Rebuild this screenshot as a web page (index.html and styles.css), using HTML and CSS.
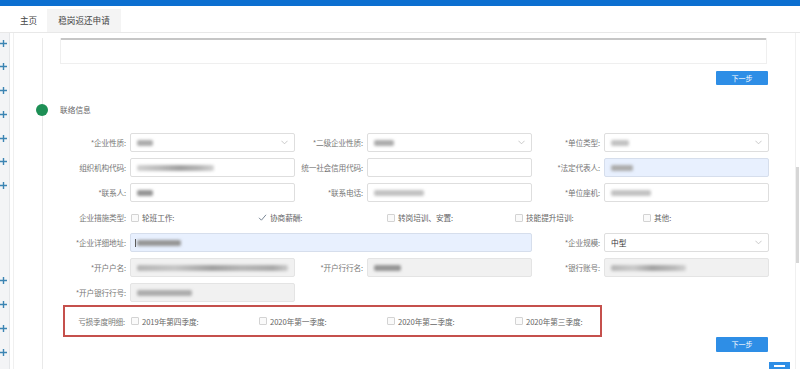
FILE: index.html
```html
<!DOCTYPE html>
<html lang="zh-CN">
<head>
<meta charset="utf-8">
<title>稳岗返还申请</title>
<link rel="stylesheet" href="styles.css">
</head>
<body>
<div class="topbar"></div>
<nav class="tabs">
  <div class="tab">主页</div>
  <div class="tab active">稳岗返还申请</div>
</nav>
<div class="body">
  <aside class="sidebar">
    <span class="side-item"><svg class="plus" viewBox="0 0 7 7"><path d="M0 3.5H7M3.5 0V7"/></svg></span>
    <span class="side-item"><svg class="plus" viewBox="0 0 7 7"><path d="M0 3.5H7M3.5 0V7"/></svg></span>
    <span class="side-item"><svg class="plus" viewBox="0 0 7 7"><path d="M0 3.5H7M3.5 0V7"/></svg></span>
    <span class="side-item"><svg class="plus" viewBox="0 0 7 7"><path d="M0 3.5H7M3.5 0V7"/></svg></span>
    <span class="side-item"><svg class="plus" viewBox="0 0 7 7"><path d="M0 3.5H7M3.5 0V7"/></svg></span>
    <span class="side-item"><svg class="plus" viewBox="0 0 7 7"><path d="M0 3.5H7M3.5 0V7"/></svg></span>
    <span class="side-item"><svg class="plus" viewBox="0 0 7 7"><path d="M0 3.5H7M3.5 0V7"/></svg></span>
    <span class="side-item"></span>
    <span class="side-item"></span>
    <span class="side-item"></span>
    <span class="side-item"><svg class="plus" viewBox="0 0 7 7"><path d="M0 3.5H7M3.5 0V7"/></svg></span>
    <span class="side-item"><svg class="plus" viewBox="0 0 7 7"><path d="M0 3.5H7M3.5 0V7"/></svg></span>
    <span class="side-item"><svg class="plus" viewBox="0 0 7 7"><path d="M0 3.5H7M3.5 0V7"/></svg></span>
    <span class="side-item"><svg class="plus" viewBox="0 0 7 7"><path d="M0 3.5H7M3.5 0V7"/></svg></span>
  </aside>

  <main class="panel">
    <div class="timeline">
      <div class="tablebox"><div class="hscroll"></div></div>
      <div class="btnrow"><button class="btn">下一步</button></div>

      <div class="section-title"><span class="dot"></span>联络信息</div>

      <div class="form">
        <!-- row 1 -->
        <div class="lbl">*企业性质:</div>
        <div class="ctl"><span class="blob w16 mid"></span><svg class="chev" viewBox="0 0 8 5"><path d="M0.5 0.5L4 4L7.5 0.5"/></svg></div>
        <div class="lbl">*二级企业性质:</div>
        <div class="ctl"><span class="blob w20 mid"></span><svg class="chev" viewBox="0 0 8 5"><path d="M0.5 0.5L4 4L7.5 0.5"/></svg></div>
        <div class="lbl">*单位类型:</div>
        <div class="ctl"><span class="blob w18 light"></span><svg class="chev" viewBox="0 0 8 5"><path d="M0.5 0.5L4 4L7.5 0.5"/></svg></div>

        <!-- row 2 -->
        <div class="lbl">组织机构代码:</div>
        <div class="ctl"><span class="blob w77 grad"></span></div>
        <div class="lbl">统一社会信用代码:</div>
        <div class="ctl"></div>
        <div class="lbl">*法定代表人:</div>
        <div class="ctl blue"><span class="blob w22 mid"></span></div>

        <!-- row 3 -->
        <div class="lbl">*联系人:</div>
        <div class="ctl"><span class="blob w16 dark"></span></div>
        <div class="lbl">*联系电话:</div>
        <div class="ctl"><span class="blob w50 light"></span></div>
        <div class="lbl">*单位座机:</div>
        <div class="ctl"><span class="blob w40 light"></span></div>

        <!-- row 4 -->
        <div class="lbl">企业措施类型:</div>
        <div class="checks">
          <label class="chk"><span class="box"></span>轮班工作:</label>
          <label class="chk"><svg class="tick" viewBox="0 0 9 9"><path d="M1 4.8L3.4 7.2L8 1.8"/></svg>协商薪酬:</label>
          <label class="chk"><span class="box"></span>转岗培训、安置:</label>
          <label class="chk"><span class="box"></span>技能提升培训:</label>
          <label class="chk"><span class="box"></span>其他:</label>
        </div>

        <!-- row 5 -->
        <div class="lbl">*企业详细地址:</div>
        <div class="ctl blue wide"><span class="caret"></span><span class="blob w44 dark"></span></div>
        <div class="lbl">*企业规模:</div>
        <div class="ctl"><span class="val">中型</span><svg class="chev" viewBox="0 0 8 5"><path d="M0.5 0.5L4 4L7.5 0.5"/></svg></div>

        <!-- row 6 -->
        <div class="lbl">*开户户名:</div>
        <div class="ctl gray"><span class="blob w155 grad2"></span></div>
        <div class="lbl">*开户行行名:</div>
        <div class="ctl gray"><span class="blob w27 dark"></span></div>
        <div class="lbl">*银行账号:</div>
        <div class="ctl gray"><span class="blob w75 grad3"></span></div>

        <!-- row 7 -->
        <div class="lbl">*开户银行行号:</div>
        <div class="ctl gray"><span class="blob w55 mid"></span></div>
      </div>

      <div class="redbox">
        <div class="lbl red-lbl">亏损季度明细:</div>
        <label class="chk"><span class="box"></span>2019年第四季度:</label>
        <label class="chk"><span class="box"></span>2020年第一季度:</label>
        <label class="chk"><span class="box"></span>2020年第二季度:</label>
        <label class="chk last"><span class="box"></span>2020年第三季度:</label>
      </div>

      <div class="btnrow2"><button class="btn">下一步</button></div>
    </div>
  </main>

  <div class="vscroll"><div class="thumb"></div></div>
  <div class="totop"><span class="totop-bar"></span></div>
</div>
</body>
</html>
```

FILE: styles.css
```css
html, body {
  margin: 0;
  padding: 0;
}
body {
  width: 800px;
  height: 369px;
  overflow: hidden;
  background: #fff;
  font-family: "Noto Sans CJK SC", "Noto Sans", sans-serif;
  color: #555;
}

.topbar {
  height: 6px;
  background: #0c6fd0;
}

.tabs {
  height: 26px;
  border-bottom: 1px solid #e8e8e8;
  display: flex;
  align-items: flex-end;
  padding-left: 11px;
  box-sizing: content-box;
}
.tab {
  height: 23px;
  line-height: 23px;
  padding: 0 9px 0 9px;
  font-size: 8.6px;
  color: #444;
  margin-right: 1px;
}
.tab.active {
  background: #f4f4f4;
  padding: 0 11px 0 11px;
}

.body {
  position: relative;
  display: flex;
  height: 336px;
}

.sidebar {
  width: 9px;
  background: #f3f4f6;
  border-right: 1px solid #e4e6e9;
  display: flex;
  flex-direction: column;
  padding-top: 0;
}
.side-item {
  height: 23.8px;
  flex: 0 0 23.8px;
  display: flex;
  align-items: flex-start;
  padding-top: 6.5px;
  box-sizing: border-box;
}
.plus {
  width: 7px;
  height: 7px;
  stroke: #3b84b3;
  stroke-width: 1.4;
  fill: none;
  margin-left: 0;
}

.panel {
  flex: 1;
  margin-left: 3px;
  border-left: 1px solid #f0f0f0;
}

.timeline {
  margin-left: 28px;
  border-left: 1px solid #e9e9e9;
  padding-left: 17px;
  width: 708px;
  height: 100%;
  box-sizing: content-box;
}

.tablebox {
  margin-top: 5px;
  height: 26px;
  width: 707px;
  border: 1px solid #efefef;
  border-top: 0;
  box-sizing: border-box;
}
.hscroll {
  margin-top: 1px;
  height: 2px;
  width: 705px;
  background: #c6c6c6;
}

.btnrow {
  margin-top: 7px;
  display: flex;
  justify-content: flex-end;
}
.btnrow2 {
  margin-top: 0;
  display: flex;
  justify-content: flex-end;
}
.btn {
  width: 52px;
  height: 14px;
  padding: 0;
  border: 0;
  border-radius: 1px;
  background: #2e8ee6;
  color: #fff;
  font-family: "Noto Sans CJK SC", sans-serif;
  font-size: 7px;
  line-height: 14px;
}
.btnrow2 .btn {
  height: 15px;
  line-height: 15px;
}

.section-title {
  position: relative;
  margin-top: 19px;
  height: 12px;
  line-height: 12px;
  font-size: 7.7px;
  color: #666;
}
.dot {
  position: absolute;
  left: -24px;
  top: 0;
  width: 12px;
  height: 12px;
  border-radius: 50%;
  background: #1d8f55;
}

.form {
  margin-top: 17px;
  display: grid;
  grid-template-columns: 70px 165px 72px 165px 72px 165px;
  grid-auto-rows: 19px;
  row-gap: 6px;
}
.lbl {
  text-align: right;
  padding-right: 4px;
  font-size: 7.7px;
  color: #777;
  line-height: 19px;
  white-space: nowrap;
  letter-spacing: -0.2px;
}
.ctl {
  border: 1px solid #dedede;
  border-radius: 2px;
  background: #fff;
  display: flex;
  align-items: center;
  padding: 0 6px;
  box-sizing: border-box;
  height: 19px;
}
.ctl.blue {
  background: #e8f0fe;
  border-color: #d6deec;
}
.ctl.gray {
  background: #f1f1f1;
  border-color: #e4e4e4;
}
.ctl.wide {
  grid-column: 2 / 5;
  padding-left: 4px;
}
.chev {
  margin-left: auto;
  width: 7px;
  height: 5px;
  stroke: #bcbcbc;
  stroke-width: 0.9;
  fill: none;
}
.val {
  font-size: 7.7px;
  color: #333;
}
.caret {
  width: 1px;
  height: 8px;
  background: #555;
  margin-right: 1px;
}

.blob {
  display: block;
  height: 6px;
  border-radius: 2px;
  filter: blur(1.4px);
}
.blob.light { background: #c2c2c2; }
.blob.mid { background: #acacac; }
.blob.dark { background: #959595; }
.blob.grad { background: linear-gradient(90deg, #d0d0d0 0%, #bababa 30%, #a0a0a0 55%, #b4b4b4 80%, #d2d2d2 100%); }
.blob.grad2 { background: linear-gradient(90deg, #b4b4b4 0%, #c6c6c6 25%, #a0a0a0 50%, #b6b6b6 70%, #a8a8a8 90%, #cacaca 100%); }
.blob.grad3 { background: linear-gradient(90deg, #b6b6b6 0%, #cacaca 30%, #a2a2a2 55%, #bababa 85%, #d2d2d2 100%); }
.w16 { width: 16px; }
.w18 { width: 18px; }
.w20 { width: 20px; }
.w22 { width: 22px; }
.w27 { width: 27px; }
.w40 { width: 40px; }
.w44 { width: 44px; }
.w50 { width: 50px; }
.w55 { width: 55px; }
.w75 { width: 75px; }
.w77 { width: 77px; }
.w155 { width: 155px; }

.checks {
  grid-column: 2 / -1;
  display: flex;
  align-items: center;
}
.chk {
  flex: 0 0 128px;
  display: flex;
  align-items: center;
  font-size: 7.7px;
  color: #666;
  white-space: nowrap;
  letter-spacing: -0.1px;
}
.chk.last {
  flex: 0 0 auto;
}
.box {
  width: 8px;
  height: 8px;
  border: 1px solid #d3d3d3;
  border-radius: 1px;
  background: #fafafa;
  box-sizing: border-box;
  margin: 0 3px 0 1px;
}
.tick {
  width: 9px;
  height: 9px;
  stroke: #7a8796;
  stroke-width: 1;
  fill: none;
  margin: 0 3px 0 0;
}

.redbox {
  margin-top: 3px;
  margin-left: 3px;
  width: 539px;
  height: 32px;
  border: 2px solid #c5504c;
  box-sizing: border-box;
  display: flex;
  align-items: center;
}
.red-lbl {
  flex: 0 0 64px;
  box-sizing: border-box;
  padding-right: 4px;
}
.redbox .chk:first-of-type {
  margin-left: 1px;
}

.vscroll {
  width: 4px;
  border-left: 1px solid #f0f0f0;
  display: flex;
  flex-direction: column;
}
.thumb {
  margin-top: 134px;
  height: 96px;
  width: 3px;
  background: #d6d6d6;
}

.totop {
  position: absolute;
  left: 769px;
  top: 329px;
  width: 21px;
  height: 16px;
  background: #2e8ee6;
  display: flex;
  justify-content: center;
  padding-top: 3px;
  box-sizing: border-box;
}
.totop-bar {
  width: 11px;
  height: 2px;
  background: #fff;
}
```
